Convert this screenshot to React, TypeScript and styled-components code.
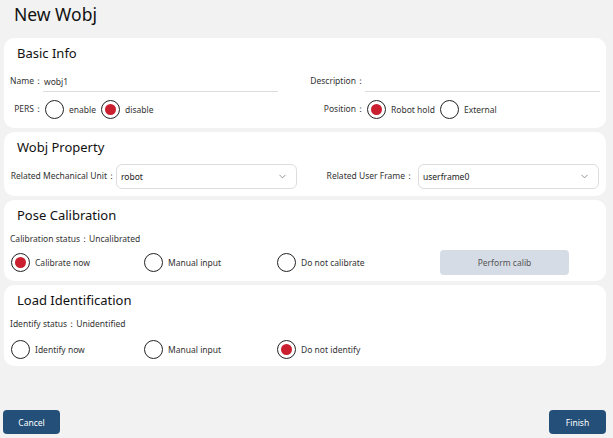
import React from "react";
import styled, { createGlobalStyle } from "styled-components";
import { ChevronDown } from "lucide-react";

const GlobalStyle = createGlobalStyle`
  html, body {
    margin: 0;
    padding: 0;
    background: #f2f2f2;
    font-family: "Noto Sans", "Open Sans", sans-serif;
    color: #222;
  }
  * { box-sizing: border-box; }
`;

function Radio({ checked, label }: { checked?: boolean; label: string }) {
  return (
    <RadioItem>
      <RadioCircle $checked={checked} />
      <span>{label}</span>
    </RadioItem>
  );
}

function Select({ value }: { value: string }) {
  return (
    <SelectBox>
      <span>{value}</span>
      <ChevronDown size={11} strokeWidth={1.5} color="#666" />
    </SelectBox>
  );
}

function App() {
  return (
    <Page>
      <GlobalStyle />
      <Title>New Wobj</Title>

      <Cards>
        <Card>
          <CardTitle>Basic Info</CardTitle>
          <TwoCols>
            <FieldRow>
              <Label $w={33}>Name：</Label>
              <Underline>wobj1</Underline>
            </FieldRow>
            <FieldRow>
              <Label $w={55}>Description：</Label>
              <Underline />
            </FieldRow>
            <FieldRow $h={20} $top={8}>
              <Label $w={33}>PERS：</Label>
              <Radio label="enable" />
              <Radio checked label="disable" />
            </FieldRow>
            <FieldRow $h={20} $top={8}>
              <Label $w={55}>Position：</Label>
              <Radio checked label="Robot hold" />
              <Radio label="External" />
            </FieldRow>
          </TwoCols>
        </Card>

        <Card $pb={7}>
          <CardTitle>Wobj Property</CardTitle>
          <SplitRow>
            <FieldRow $h={25}>
              <Label $w={106}>Related Mechanical Unit：</Label>
              <Select value="robot" />
            </FieldRow>
            <FieldRow $h={25}>
              <Label>Related User Frame：</Label>
              <Select value="userframe0" />
            </FieldRow>
          </SplitRow>
        </Card>

        <Card $pb={6}>
          <CardTitle>Pose Calibration</CardTitle>
          <Status $mb={4}>Calibration status：Uncalibrated</Status>
          <OptionRow>
            <OptionCell>
              <Radio checked label="Calibrate now" />
            </OptionCell>
            <OptionCell>
              <Radio label="Manual input" />
            </OptionCell>
            <OptionCell>
              <Radio label="Do not calibrate" />
            </OptionCell>
            <CalibButton>Perform calib</CalibButton>
          </OptionRow>
        </Card>

        <Card $pb={7}>
          <CardTitle>Load Identification</CardTitle>
          <Status $mb={8}>Identify status：Unidentified</Status>
          <OptionRow $h={20}>
            <OptionCell>
              <Radio label="Identify now" />
            </OptionCell>
            <OptionCell>
              <Radio label="Manual input" />
            </OptionCell>
            <OptionCell>
              <Radio checked label="Do not identify" />
            </OptionCell>
          </OptionRow>
        </Card>
      </Cards>

      <Footer>
        <ActionButton>Cancel</ActionButton>
        <ActionButton>Finish</ActionButton>
      </Footer>
    </Page>
  );
}

const Page = styled.div`
  height: 100vh;
  display: flex;
  flex-direction: column;
  padding: 0 7px 4px 4px;
`;

const Title = styled.h1`
  margin: 0;
  height: 38px;
  padding: 2px 0 0 10px;
  font-size: 17.5px;
  line-height: 24px;
  font-weight: 400;
  color: #111;
`;

const Cards = styled.div`
  display: flex;
  flex-direction: column;
  gap: 4px;
`;

const Card = styled.section<{ $pb?: number }>`
  background: #fff;
  border-radius: 10px;
  padding: 6px 6px ${(p) => p.$pb ?? 9}px 6px;
`;

const CardTitle = styled.h2`
  margin: 0 0 8px 0;
  padding-left: 7px;
  font-size: 13px;
  line-height: 18px;
  font-weight: 400;
  color: #111;
`;

const TwoCols = styled.div`
  display: grid;
  grid-template-columns: 268px 290px;
  column-gap: 32px;
  margin-top: 9px;
`;

const SplitRow = styled.div`
  display: flex;
  justify-content: space-between;
  padding-right: 1px;
`;

const FieldRow = styled.div<{ $h?: number; $top?: number }>`
  display: flex;
  align-items: center;
  height: ${(p) => p.$h ?? 20}px;
  margin-top: ${(p) => p.$top ?? 0}px;
  font-size: 8.5px;
`;

const Label = styled.span<{ $w?: number }>`
  flex: none;
  width: ${(p) => (p.$w ? `${p.$w}px` : "auto")};
  text-align: right;
  padding-right: ${(p) => (p.$w ? 0 : 4)}px;
  color: #333;
  white-space: nowrap;
`;

const Underline = styled.div`
  flex: 1;
  height: 20px;
  display: flex;
  align-items: center;
  padding-left: 1px;
  border-bottom: 1px solid #ddd;
  margin-bottom: -2px;
  color: #333;
`;

const RadioItem = styled.label`
  display: inline-flex;
  align-items: center;
  gap: 5px;
  margin-left: 2px;
  margin-right: 3px;
  font-size: 8.5px;
  color: #333;
  white-space: nowrap;
`;

const RadioCircle = styled.span<{ $checked?: boolean }>`
  width: 19px;
  height: 19px;
  border-radius: 50%;
  border: 1.5px solid #222;
  display: inline-flex;
  align-items: center;
  justify-content: center;
  background: #fff;
  &::after {
    content: "";
    width: 11px;
    height: 11px;
    border-radius: 50%;
    background: ${(p) => (p.$checked ? "#c91f2e" : "transparent")};
  }
`;

const SelectBox = styled.div`
  width: 181px;
  height: 25px;
  border: 1px solid #ddd;
  border-radius: 6px;
  display: flex;
  align-items: center;
  justify-content: space-between;
  padding: 0 8px 0 4px;
  font-size: 8.5px;
  color: #222;
`;

const Status = styled.div<{ $mb: number }>`
  height: 14px;
  line-height: 14px;
  margin-bottom: ${(p) => p.$mb}px;
  font-size: 8.5px;
  color: #333;
`;

const OptionRow = styled.div<{ $h?: number }>`
  display: flex;
  align-items: center;
  height: ${(p) => p.$h ?? 25}px;
  padding-left: 1px;
`;

const OptionCell = styled.div`
  width: 133px;
  display: flex;
  align-items: center;

  & > label {
    margin-left: 0;
  }
`;

const CalibButton = styled.button`
  margin-left: 30px;
  width: 129px;
  height: 25px;
  border: none;
  border-radius: 4px;
  background: #d5dce6;
  color: #555;
  font-family: inherit;
  font-size: 8.5px;
`;

const Footer = styled.div`
  margin-top: auto;
  display: flex;
  justify-content: space-between;
  margin-left: -1px;
`;

const ActionButton = styled.button`
  width: 57px;
  height: 24px;
  border: none;
  border-radius: 4px;
  background: #234f78;
  color: #fff;
  font-family: inherit;
  font-size: 8.5px;
`;

export default App;
